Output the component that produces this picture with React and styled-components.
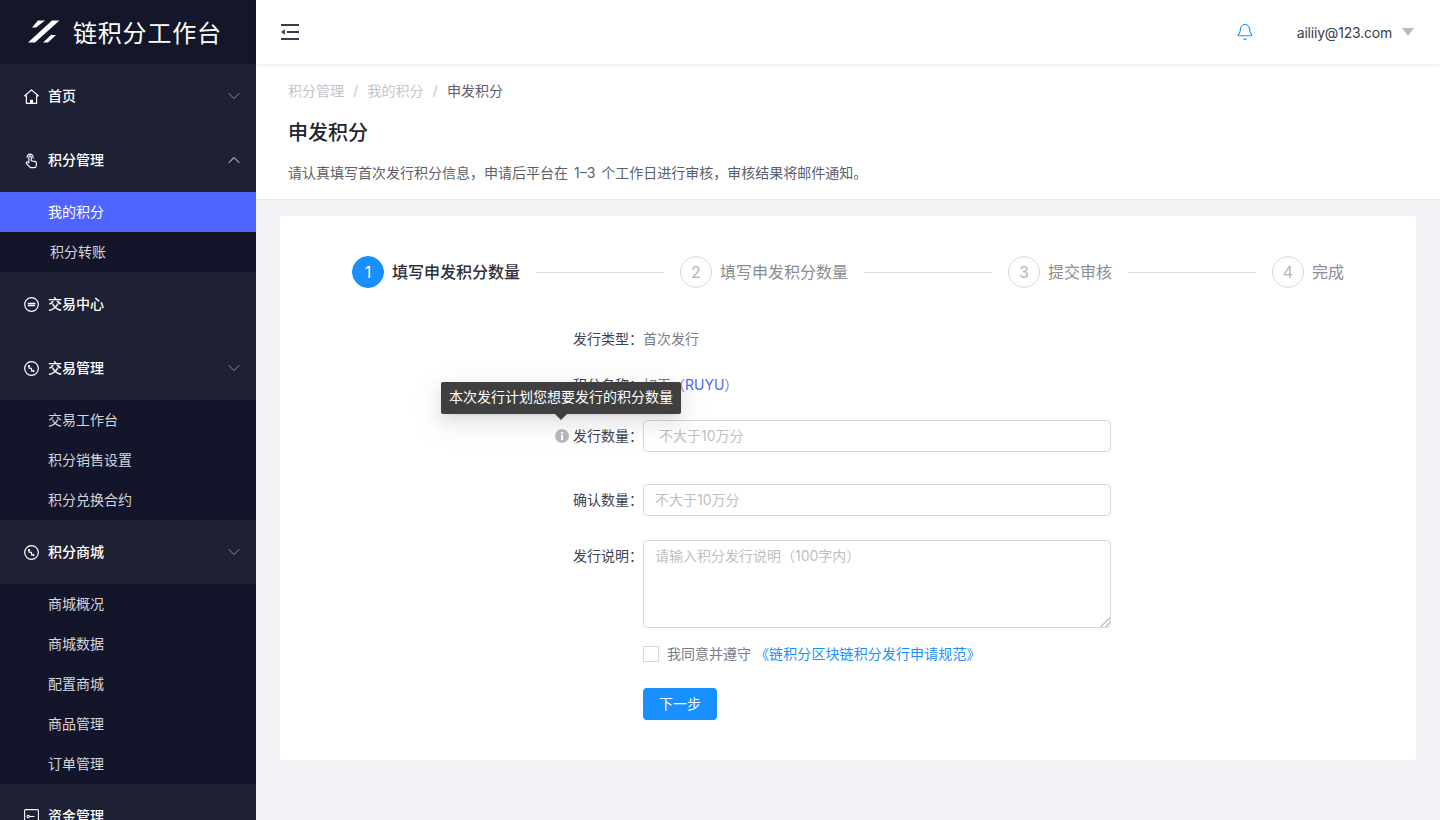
import React from 'react';
import styled, { createGlobalStyle } from 'styled-components';
import { ChevronDown, ChevronUp, Bell } from 'lucide-react';

const GlobalStyle = createGlobalStyle`
  html, body {
    margin: 0;
    height: 100%;
    overflow: hidden;
    background: #f0f2f5;
    font-family: Inter, "Noto Sans CJK SC", "Liberation Sans", sans-serif;
    font-size: 14px;
  }
  * {
    box-sizing: border-box;
  }
`;

const Layout = styled.div`
  display: flex;
  width: 1440px;
  height: 820px;
  overflow: hidden;
`;

const Sider = styled.aside`
  flex: 0 0 256px;
  height: 820px;
  overflow: hidden;
  background: #1e2033;
`;

const Logo = styled.div`
  display: flex;
  align-items: center;
  height: 64px;
  padding-left: 28px;
  background: #14162a;
  color: #fff;
  font-size: 24px;
  letter-spacing: 0.8px;
  gap: 13px;
  span {
    padding-bottom: 2px;
  }
`;

const MenuTitle = styled.div`
  display: flex;
  align-items: center;
  height: 64px;
  padding: 0 12px 0 24px;
  color: #fff;
  font-weight: 500;
  gap: 9px;
  span {
    flex: 1;
    padding-bottom: 2px;
  }
`;

const IconSlot = styled.div`
  display: flex;
  align-items: center;
  justify-content: center;
  width: 15px;
  height: 17px;
  color: #fff;
`;

const Arrow = styled.div`
  display: flex;
  color: ${(p) => (p.$open ? '#fff' : '#8b8d9b')};
`;

const SubMenu = styled.div`
  background: #13152a;
`;

const SubItem = styled.div`
  display: flex;
  align-items: center;
  height: 40px;
  padding-left: ${(p) => p.$indent || 48}px;
  padding-bottom: 2px;
  color: ${(p) => (p.$active ? '#fff' : '#d5d6dc')};
  background: ${(p) => (p.$active ? '#5064ff' : 'transparent')};
`;

const Main = styled.main`
  flex: 1;
  min-width: 0;
  display: flex;
  flex-direction: column;
`;

const TopBar = styled.header`
  position: relative;
  z-index: 1;
  display: flex;
  align-items: center;
  flex: 0 0 64px;
  padding: 0 26px 0 25px;
  background: #fff;
  box-shadow: 0 1px 4px rgba(0, 21, 41, 0.1);
`;

const TopRight = styled.div`
  margin-left: auto;
  display: flex;
  align-items: center;
`;

const BellBox = styled.div`
  display: flex;
  color: #1890ff;
  margin-right: 43px;
`;

const UserName = styled.span`
  color: #3b3d4d;
  font-size: 14px;
  letter-spacing: -0.2px;
`;

const Caret = styled.i`
  width: 0;
  height: 0;
  margin-left: 10px;
  border-left: 6px solid transparent;
  border-right: 6px solid transparent;
  border-top: 8px solid #b9bac2;
`;

const PageHead = styled.section`
  background: #fff;
  border-bottom: 1px solid #e8e9ee;
  padding: 16px 32px 0;
  height: 136px;
`;

const Crumbs = styled.div`
  display: flex;
  align-items: center;
  height: 22px;
  padding-bottom: 2px;
  color: #c4c5cc;
  gap: 9.25px;
`;

const Crumb = styled.span`
  color: ${(p) => (p.$current ? '#5c5e6b' : '#c4c5cc')};
`;

const PageTitle = styled.h1`
  margin: 17px 0 0;
  height: 28px;
  line-height: 28px;
  font-size: 20px;
  font-weight: 500;
  color: #22232e;
`;

const PageDesc = styled.p`
  margin: 15px 0 0;
  line-height: 22px;
  word-spacing: 2px;
  color: #5c5e6b;
`;

const Card = styled.section`
  position: relative;
  margin: 16px 24px 0;
  height: 544px;
  padding: 40px 0;
  background: #fff;
`;

const Steps = styled.div`
  display: flex;
  align-items: center;
  padding: 0 72px;
  margin-bottom: 35px;
`;

const StepDot = styled.div`
  display: flex;
  align-items: center;
  justify-content: center;
  flex: 0 0 32px;
  height: 32px;
  border-radius: 50%;
  font-size: 16px;
  color: ${(p) => (p.$active ? '#fff' : '#b3b4bb')};
  background: ${(p) => (p.$active ? '#1890ff' : '#fff')};
  border: 1px solid ${(p) => (p.$active ? '#1890ff' : '#d9d9d9')};
`;

const StepName = styled.span`
  margin-left: 8px;
  padding-bottom: 2px;
  font-size: 16px;
  white-space: nowrap;
  font-weight: ${(p) => (p.$active ? 500 : 400)};
  color: ${(p) => (p.$active ? '#2d2e38' : '#8b8c94')};
`;

const StepLine = styled.div`
  flex: 1;
  height: 1px;
  margin: 0 16px;
  background: #dcdde0;
`;

const Row = styled.div`
  position: relative;
  display: flex;
  align-items: ${(p) => (p.$top ? 'flex-start' : 'center')};
  min-height: 32px;
  margin-bottom: ${(p) => p.$gap || 0}px;
`;

const Label = styled.label`
  display: flex;
  align-items: center;
  justify-content: flex-end;
  flex: 0 0 363px;
  height: 32px;
  padding-bottom: 2px;
  color: #3f414e;
`;

const Info = styled.div`
  display: flex;
  margin: 2px 4px 0 0;
`;

const Value = styled.span`
  padding-bottom: 2px;
  color: #7a7c87;
`;

const Code = styled.span`
  color: #5064ff;
`;

const Input = styled.input`
  width: 468px;
  height: 32px;
  padding: 0 ${(p) => p.$pad || 11}px 2px;
  border: 1px solid #d9d9d9;
  border-radius: 4px;
  font: inherit;
  outline: none;
  &::placeholder {
    color: #bfbfbf;
  }
`;

const TextArea = styled.textarea`
  display: block;
  width: 468px;
  height: 88px;
  padding: 4px 11px;
  border: 1px solid #d9d9d9;
  border-radius: 4px;
  font: inherit;
  line-height: 22px;
  outline: none;
  &::placeholder {
    color: #bfbfbf;
  }
  &::-webkit-resizer {
    background: linear-gradient(
      135deg,
      transparent 66%,
      #c4c4c4 66%,
      #c4c4c4 71%,
      transparent 71%,
      transparent 82%,
      #c4c4c4 82%,
      #c4c4c4 87%,
      transparent 87%
    );
  }
`;

const Agree = styled.div`
  display: flex;
  align-items: center;
  height: 16px;
  margin: 18px 0 26px 363px;
  color: #7a7c87;
`;

const AgreeText = styled.span`
  padding-bottom: 2px;
`;

const Check = styled.span`
  flex: 0 0 16px;
  height: 16px;
  margin-right: 8px;
  border: 1px solid #d9d9d9;
  background: #fff;
`;

const DocLink = styled.a`
  margin-left: 4px;
  letter-spacing: 0.1px;
  color: #1890ff;
`;

const NextBtn = styled.button`
  display: block;
  width: 74px;
  height: 32px;
  margin-left: 363px;
  padding: 0 0 2px;
  border: 0;
  border-radius: 4px;
  background: #1890ff;
  color: #fff;
  font: inherit;
`;

const Tip = styled.div`
  position: absolute;
  left: 161px;
  bottom: 38px;
  width: 240px;
  height: 32px;
  line-height: 30px;
  text-align: center;
  border-radius: 2px;
  color: #fff;
  background: #3f3f3f;
  white-space: nowrap;
  box-shadow: 0 3px 6px -4px rgba(0, 0, 0, 0.12), 0 6px 16px 0 rgba(0, 0, 0, 0.08),
    0 9px 28px 8px rgba(0, 0, 0, 0.05);
  &::after {
    content: '';
    position: absolute;
    left: 114px;
    top: 100%;
    border-left: 6px solid transparent;
    border-right: 6px solid transparent;
    border-top: 6px solid #3f3f3f;
  }
`;

const LogoMark = () => (
  <svg width="32" height="24" viewBox="0 0 32 24" fill="#fff">
    <path d="M10 .6h7L8 7.6H4z" />
    <path d="M24 .6h7.5L7 22.6H0z" />
    <path d="M23 15h5l-8 7.6h-5z" />
  </svg>
);

const HomeIcon = () => (
  <svg width="15" height="15" viewBox="0 0 15 15" fill="none" stroke="#fff" strokeWidth="1.2" strokeLinejoin="round">
    <path d="M.8 6.8 7.5.9l6.7 5.9h-1.6v7.5H2.4V6.8z" />
    <path d="M6 14.2v-3.4h3v3.4z" fill="#fff" stroke="none" />
  </svg>
);

const HandIcon = () => (
  <svg width="15" height="17" viewBox="0 0 16 18" fill="none" stroke="#fff" strokeWidth="1.2" strokeLinejoin="round">
    <path d="M5.2 11.4V5.4a1.3 1.3 0 0 1 2.6 0v3.8l4.3 1c.8.2 1.3.9 1.2 1.7l-.4 3.2c-.1.9-.9 1.5-1.7 1.5H7.5c-.6 0-1.1-.2-1.5-.7l-3.4-3.7c-.5-.6-.3-1.4.3-1.7.5-.3 1.1-.2 1.5.2z" />
    <path d="M3.4 6.2a3.2 3.2 0 1 1 6 .6" />
  </svg>
);

const SwapIcon = () => (
  <svg width="15" height="15" viewBox="0 0 15 15" fill="none" stroke="#fff" strokeWidth="1.2">
    <circle cx="7.5" cy="7.5" r="6.8" />
    <path d="M3.8 6.6h7.6M11.2 8.5H3.8" strokeWidth="1.5" />
  </svg>
);

const TradeIcon = () => (
  <svg width="15" height="15" viewBox="0 0 15 15" fill="none" stroke="#fff" strokeWidth="1.2">
    <circle cx="7.5" cy="7.5" r="6.8" />
    <path d="M5 4.6v2.7h2.5v2.6H10M3.9 5.7 5 4.6l1.1 1.1M8.9 8.8 10 9.9l-1.1 1.1" strokeWidth="1.1" />
  </svg>
);

const WalletIcon = () => (
  <svg width="15" height="15" viewBox="0 0 15 15" fill="none" stroke="#fff" strokeWidth="1.1">
    <rect x="0.6" y="0.6" width="13.8" height="13.8" rx="1" />
    <circle cx="4.2" cy="7.5" r="1.2" />
    <path d="M5.4 7.5h5" />
  </svg>
);

const FoldIcon = () => (
  <svg width="18" height="16" viewBox="0 0 18 16" fill="#3b3d4d">
    <rect x="0" y="0" width="18" height="2" />
    <rect x="6" y="7" width="12" height="2" />
    <rect x="0" y="14" width="18" height="2" />
    <path d="M0 8 3.8 5.2v5.6z" />
  </svg>
);

const InfoIcon = () => (
  <svg width="14" height="14" viewBox="0 0 14 14">
    <circle cx="7" cy="7" r="7" fill="#b9bac2" />
    <rect x="6" y="6" width="2" height="5" fill="#fff" />
    <rect x="6" y="3" width="2" height="2" fill="#fff" />
  </svg>
);

const Menu = ({ icon, title, arrow }) => (
  <MenuTitle>
    <IconSlot>{icon}</IconSlot>
    <span>{title}</span>
    {arrow && (
      <Arrow $open={arrow === 'up'}>
        {arrow === 'up' ? (
          <ChevronUp size={20} strokeWidth={1.2} />
        ) : (
          <ChevronDown size={20} strokeWidth={1.2} />
        )}
      </Arrow>
    )}
  </MenuTitle>
);

const steps = [
  { no: 1, name: '填写申发积分数量', active: true },
  { no: 2, name: '填写申发积分数量' },
  { no: 3, name: '提交审核' },
  { no: 4, name: '完成' },
];

export default function App() {
  return (
    <Layout>
      <GlobalStyle />
      <Sider>
        <Logo>
          <LogoMark />
          <span>链积分工作台</span>
        </Logo>
        <Menu icon={<HomeIcon />} title="首页" arrow="down" />
        <Menu icon={<HandIcon />} title="积分管理" arrow="up" />
        <SubMenu>
          <SubItem $active>我的积分</SubItem>
          <SubItem $indent={50}>积分转账</SubItem>
        </SubMenu>
        <Menu icon={<SwapIcon />} title="交易中心" />
        <Menu icon={<TradeIcon />} title="交易管理" arrow="down" />
        <SubMenu>
          <SubItem>交易工作台</SubItem>
          <SubItem>积分销售设置</SubItem>
          <SubItem>积分兑换合约</SubItem>
        </SubMenu>
        <Menu icon={<TradeIcon />} title="积分商城" arrow="down" />
        <SubMenu>
          <SubItem>商城概况</SubItem>
          <SubItem>商城数据</SubItem>
          <SubItem>配置商城</SubItem>
          <SubItem>商品管理</SubItem>
          <SubItem>订单管理</SubItem>
        </SubMenu>
        <Menu icon={<WalletIcon />} title="资金管理" />
      </Sider>
      <Main>
        <TopBar>
          <FoldIcon />
          <TopRight>
            <BellBox>
              <Bell size={18} strokeWidth={1.5} />
            </BellBox>
            <UserName>ailiiy@123.com</UserName>
            <Caret />
          </TopRight>
        </TopBar>
        <PageHead>
          <Crumbs>
            <Crumb>积分管理</Crumb>/<Crumb>我的积分</Crumb>/<Crumb $current>申发积分</Crumb>
          </Crumbs>
          <PageTitle>申发积分</PageTitle>
          <PageDesc>
            请认真填写首次发行积分信息，申请后平台在 1–3 个工作日进行审核，审核结果将邮件通知。
          </PageDesc>
        </PageHead>
        <Card>
          <Steps>
            {steps.map((s, i) => (
              <React.Fragment key={s.no}>
                <StepDot $active={s.active}>{s.no}</StepDot>
                <StepName $active={s.active}>{s.name}</StepName>
                {i < steps.length - 1 && <StepLine />}
              </React.Fragment>
            ))}
          </Steps>
          <Row $gap={14}>
            <Label>发行类型：</Label>
            <Value>首次发行</Value>
          </Row>
          <Row $gap={19}>
            <Label>积分名称：</Label>
            <Value>
              如玉（<Code>RUYU</Code>）
            </Value>
          </Row>
          <Row $gap={32}>
            <Label>
              <Info>
                <InfoIcon />
              </Info>
              发行数量：
            </Label>
            <Input $pad={15} placeholder="不大于10万分" />
            <Tip>本次发行计划您想要发行的积分数量</Tip>
          </Row>
          <Row $gap={24}>
            <Label>确认数量：</Label>
            <Input placeholder="不大于10万分" />
          </Row>
          <Row $top>
            <Label>发行说明：</Label>
            <TextArea placeholder="请输入积分发行说明（100字内）" />
          </Row>
          <Agree>
            <Check />
            <AgreeText>
              我同意并遵守
              <DocLink>《链积分区块链积分发行申请规范》</DocLink>
            </AgreeText>
          </Agree>
          <NextBtn>下一步</NextBtn>
        </Card>
      </Main>
    </Layout>
  );
}
